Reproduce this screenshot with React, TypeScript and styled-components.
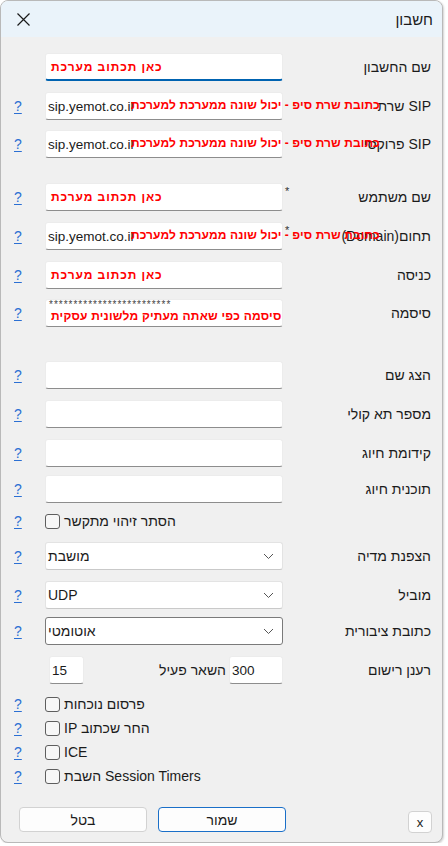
import React from 'react';
import styled, { createGlobalStyle } from 'styled-components';

const Global = createGlobalStyle`
  html, body { margin: 0; padding: 0; background: #ffffff; }
  body { font-family: "Liberation Sans", Arial, sans-serif; color: #1b1b1b; }
  * { box-sizing: border-box; }
`;

const Window = styled.div`
  width: 443px;
  height: 843px;
  border: 1px solid #b9b9b9;
  border-radius: 8px;
  overflow: hidden;
  background: #f0f0f0;
  display: flex;
  flex-direction: column;
  box-shadow: 1px 1px 2px rgba(0, 0, 0, 0.18);
`;

const TitleBar = styled.div`
  height: 36px;
  flex: none;
  background: #eaf3fa;
  display: flex;
  align-items: center;
  justify-content: space-between;
  padding: 0 9px 0 16px;
`;

const Title = styled.div`
  font-size: 15px;
  direction: rtl;
  color: #1a1a1a;
`;

const Form = styled.div`
  display: flex;
  flex-direction: column;
  flex: 1;
`;

const Row = styled.div<{ $mt: number; $h?: number }>`
  position: relative;
  display: grid;
  grid-template-columns: 44px 238px 1fr;
  align-items: center;
  height: ${(p) => p.$h ?? 26}px;
  margin-top: ${(p) => p.$mt}px;
`;

const Help = styled.a`
  padding-left: 13px;
  font-size: 14px;
  color: #2b6fd3;
  text-decoration: underline;
  text-underline-offset: 2px;
  cursor: pointer;
`;

const LabelCell = styled.div<{ $ltr?: boolean }>`
  position: relative;
  height: 100%;
  line-height: 28px;
  text-align: right;
  padding-right: 11px;
  font-size: 14px;
  color: #1b1b1b;
  white-space: nowrap;
  direction: ${(p) => (p.$ltr ? 'ltr' : 'rtl')};
`;

const Star = styled.span`
  position: absolute;
  left: 2px;
  top: -6px;
  font-size: 11px;
  color: #333;
`;

const TextBox = styled.div<{ $focus?: boolean; $w?: number }>`
  position: relative;
  height: 100%;
  width: ${(p) => (p.$w ? `${p.$w}px` : '100%')};
  background: #ffffff;
  border: 1px solid #ececec;
  border-bottom: ${(p) => (p.$focus ? '2px solid #0063b1' : '1px solid #8d8d8d')};
  border-radius: 3px;
  display: flex;
  align-items: center;
  padding-left: 2px;
  font-size: 13.5px;
  color: #1b1b1b;
  white-space: nowrap;
`;

const RedNote = styled.span`
  font-weight: bold;
  font-size: 12px;
  letter-spacing: 0.9px;
  color: #ff0000;
  direction: rtl;
  white-space: nowrap;
  padding-left: 3px;
`;

const RedOverlay = styled.span<{ $left: number }>`
  position: absolute;
  left: ${(p) => p.$left}px;
  top: 50%;
  transform: translateY(-50%);
  font-weight: bold;
  font-size: 12px;
  letter-spacing: 0.1px;
  color: #ff0000;
  direction: rtl;
  white-space: nowrap;
  z-index: 2;
`;

const Stars = styled.span`
  position: absolute;
  left: 3px;
  top: -1px;
  font-size: 10px;
  color: #444;
  letter-spacing: 1px;
`;

const PassNote = styled.span`
  position: absolute;
  left: 5px;
  bottom: 3px;
  font-weight: bold;
  font-size: 12px;
  letter-spacing: 0.2px;
  color: #ff0000;
  direction: rtl;
  white-space: nowrap;
`;

const Combo = styled.div<{ $dark?: boolean }>`
  height: 100%;
  background: #ffffff;
  border: 1px solid ${(p) => (p.$dark ? '#7a7a7a' : '#e3e3e3')};
  border-bottom-color: ${(p) => (p.$dark ? '#7a7a7a' : '#c9c9c9')};
  border-radius: 3px;
  display: flex;
  align-items: center;
  justify-content: space-between;
  padding: 0 8px 0 2px;
  font-size: 14px;
  color: #1b1b1b;
`;

const ComboText = styled.span`
  direction: rtl;
`;

const CheckLine = styled.label`
  grid-column: 2 / 4;
  display: flex;
  align-items: center;
  gap: 4px;
  font-size: 14px;
  color: #1b1b1b;
  white-space: nowrap;
`;

const CheckBox = styled.span`
  width: 15px;
  height: 15px;
  flex: none;
  border: 1px solid #5e5e5e;
  border-radius: 3px;
  background: #f7f7f7;
`;

const CheckText = styled.span<{ $ltr?: boolean }>`
  direction: ${(p) => (p.$ltr ? 'ltr' : 'rtl')};
`;

const InlineGroup = styled.div`
  height: 100%;
  display: flex;
  align-items: center;
  padding-left: 4px;
`;

const InlineLabel = styled.span`
  margin-left: auto;
  margin-right: 3px;
  font-size: 14px;
  direction: rtl;
`;

const Footer = styled.div`
  display: flex;
  align-items: flex-end;
  gap: 11px;
  margin-top: 19px;
  padding-left: 18px;
  padding-right: 10px;
`;

const Button = styled.button<{ $primary?: boolean }>`
  width: 128px;
  height: 25px;
  background: #fdfdfd;
  border: 1px solid ${(p) => (p.$primary ? '#1a6fc8' : '#d2d2d2')};
  border-radius: 4px;
  font-family: "Liberation Sans", Arial, sans-serif;
  font-size: 14px;
  color: #1b1b1b;
  direction: rtl;
  padding: 0;
`;

const SmallButton = styled(Button)`
  width: 24px;
  height: 22px;
  margin-left: auto;
  margin-bottom: -1px;
  font-size: 13px;
`;

const Chevron = () => (
  <svg width="11" height="7" viewBox="0 0 11 7">
    <path d="M1 1 L5.5 5.5 L10 1" fill="none" stroke="#555" strokeWidth="1" />
  </svg>
);

const CloseIcon = () => (
  <svg width="13" height="13" viewBox="0 0 13 13">
    <path d="M0.5 0.5 L12.5 12.5 M12.5 0.5 L0.5 12.5" stroke="#1a1a1a" strokeWidth="1.2" />
  </svg>
);

const SIP_NOTE = 'כתובת שרת סיפ - יכול שונה ממערכת למערכת';
const HERE = 'כאן תכתוב מערכת';

export default function App() {
  return (
    <>
      <Global />
      <Window>
        <TitleBar>
          <CloseIcon />
          <Title>חשבון</Title>
        </TitleBar>
        <Form>
          <Row $mt={16}>
            <span />
            <TextBox $focus>
              <RedNote>{HERE}</RedNote>
            </TextBox>
            <LabelCell>שם החשבון</LabelCell>
          </Row>

          <Row $mt={13}>
            <Help>?</Help>
            <TextBox>sip.yemot.co.il</TextBox>
            <LabelCell>SIP שרת</LabelCell>
            <RedOverlay $left={130}>{SIP_NOTE}</RedOverlay>
          </Row>

          <Row $mt={12}>
            <Help>?</Help>
            <TextBox>sip.yemot.co.il</TextBox>
            <LabelCell>SIP פרוקסי</LabelCell>
            <RedOverlay $left={130}>{SIP_NOTE}</RedOverlay>
          </Row>

          <Row $mt={27}>
            <Help>?</Help>
            <TextBox>
              <RedNote>{HERE}</RedNote>
            </TextBox>
            <LabelCell>
              <Star>*</Star>
              שם משתמש
            </LabelCell>
          </Row>

          <Row $mt={13}>
            <Help>?</Help>
            <TextBox>sip.yemot.co.il</TextBox>
            <LabelCell $ltr>
              <Star>*</Star>
              (Domain)תחום
            </LabelCell>
            <RedOverlay $left={130}>{SIP_NOTE}</RedOverlay>
          </Row>

          <Row $mt={13}>
            <Help>?</Help>
            <TextBox>
              <RedNote>{HERE}</RedNote>
            </TextBox>
            <LabelCell>כניסה</LabelCell>
          </Row>

          <Row $mt={12}>
            <Help>?</Help>
            <TextBox>
              <Stars>*************************</Stars>
              <PassNote>סיסמה כפי שאתה מעתיק מלשונית עסקית</PassNote>
            </TextBox>
            <LabelCell>סיסמה</LabelCell>
          </Row>

          <Row $mt={36}>
            <Help>?</Help>
            <TextBox />
            <LabelCell>הצג שם</LabelCell>
          </Row>

          <Row $mt={13}>
            <Help>?</Help>
            <TextBox />
            <LabelCell>מספר תא קולי</LabelCell>
          </Row>

          <Row $mt={13}>
            <Help>?</Help>
            <TextBox />
            <LabelCell>קידומת חיוג</LabelCell>
          </Row>

          <Row $mt={10}>
            <Help>?</Help>
            <TextBox />
            <LabelCell>תוכנית חיוג</LabelCell>
          </Row>

          <Row $mt={7}>
            <Help>?</Help>
            <CheckLine>
              <CheckBox />
              <CheckText>הסתר זיהוי מתקשר</CheckText>
            </CheckLine>
          </Row>

          <Row $mt={8}>
            <Help>?</Help>
            <Combo>
              <ComboText>מושבת</ComboText>
              <Chevron />
            </Combo>
            <LabelCell>הצפנת מדיה</LabelCell>
          </Row>

          <Row $mt={13}>
            <Help>?</Help>
            <Combo>
              <ComboText>UDP</ComboText>
              <Chevron />
            </Combo>
            <LabelCell>מוביל</LabelCell>
          </Row>

          <Row $mt={10}>
            <Help>?</Help>
            <Combo $dark>
              <ComboText>אוטומטי</ComboText>
              <Chevron />
            </Combo>
            <LabelCell>כתובת ציבורית</LabelCell>
          </Row>

          <Row $mt={13} $h={27}>
            <span />
            <InlineGroup>
              <TextBox $w={35}>15</TextBox>
              <InlineLabel>השאר פעיל</InlineLabel>
              <TextBox $w={54}>300</TextBox>
            </InlineGroup>
            <LabelCell>רענן רישום</LabelCell>
          </Row>

          <Row $mt={9} $h={24}>
            <Help>?</Help>
            <CheckLine>
              <CheckBox />
              <CheckText>פרסום נוכחות</CheckText>
            </CheckLine>
          </Row>
          <Row $mt={0} $h={24}>
            <Help>?</Help>
            <CheckLine>
              <CheckBox />
              <CheckText $ltr>IP החר שכתוב</CheckText>
            </CheckLine>
          </Row>
          <Row $mt={0} $h={24}>
            <Help>?</Help>
            <CheckLine>
              <CheckBox />
              <CheckText $ltr>ICE</CheckText>
            </CheckLine>
          </Row>
          <Row $mt={0} $h={24}>
            <Help>?</Help>
            <CheckLine>
              <CheckBox />
              <CheckText $ltr>השבת Session Timers</CheckText>
            </CheckLine>
          </Row>

          <Footer>
            <Button>בטל</Button>
            <Button $primary>שמור</Button>
            <SmallButton>x</SmallButton>
          </Footer>
        </Form>
      </Window>
    </>
  );
}
